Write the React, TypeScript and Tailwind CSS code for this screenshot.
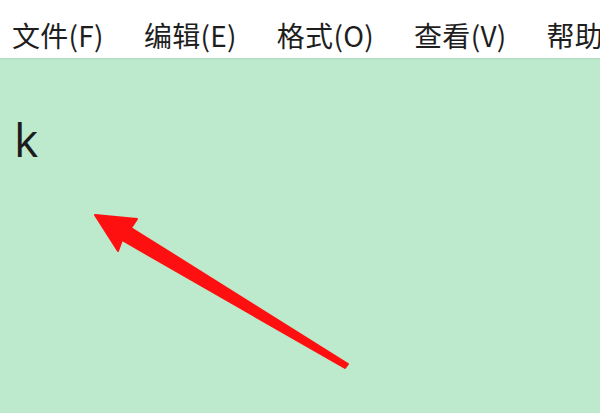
import React from 'react';

const menus = ['文件(F)', '编辑(E)', '格式(O)', '查看(V)', '帮助(H)'];

const App: React.FC = () => {
  return (
    <div
      className="w-[600px] h-[413px] overflow-hidden flex flex-col bg-[#bde9cc]"
      style={{ fontFamily: '"Noto Sans CJK SC", "Noto Sans", sans-serif' }}
    >
      {/* Menu bar */}
      <div className="h-[58px] shrink-0 bg-white flex items-center pt-[12px] pl-[12px] gap-[40px] whitespace-nowrap shadow-[0_1px_2px_rgba(0,0,0,0.08)]">
        {menus.map((m) => (
          <span key={m} className="text-[28px] leading-none text-[#1e1e1e] tracking-[0.3px]">
            {m}
          </span>
        ))}
      </div>

      {/* Editor area */}
      <div className="relative flex-1">
        <div
          className="pl-[14px] pt-[58px] text-[46px] leading-none text-[#1c1c1c]"
          style={{ fontFamily: '"Open Sans", "Noto Sans", sans-serif' }}
        >
          k
        </div>
        <svg className="absolute left-0 top-0" width="600" height="355" viewBox="0 58 600 355">
          <polygon
            points="95,215 137,219 131,228 348,364 345,368 122,240 118,251"
            fill="#ff1010"
            stroke="#ff1010"
            strokeWidth="2"
            strokeLinejoin="round"
          />
        </svg>
      </div>
    </div>
  );
};

export default App;
